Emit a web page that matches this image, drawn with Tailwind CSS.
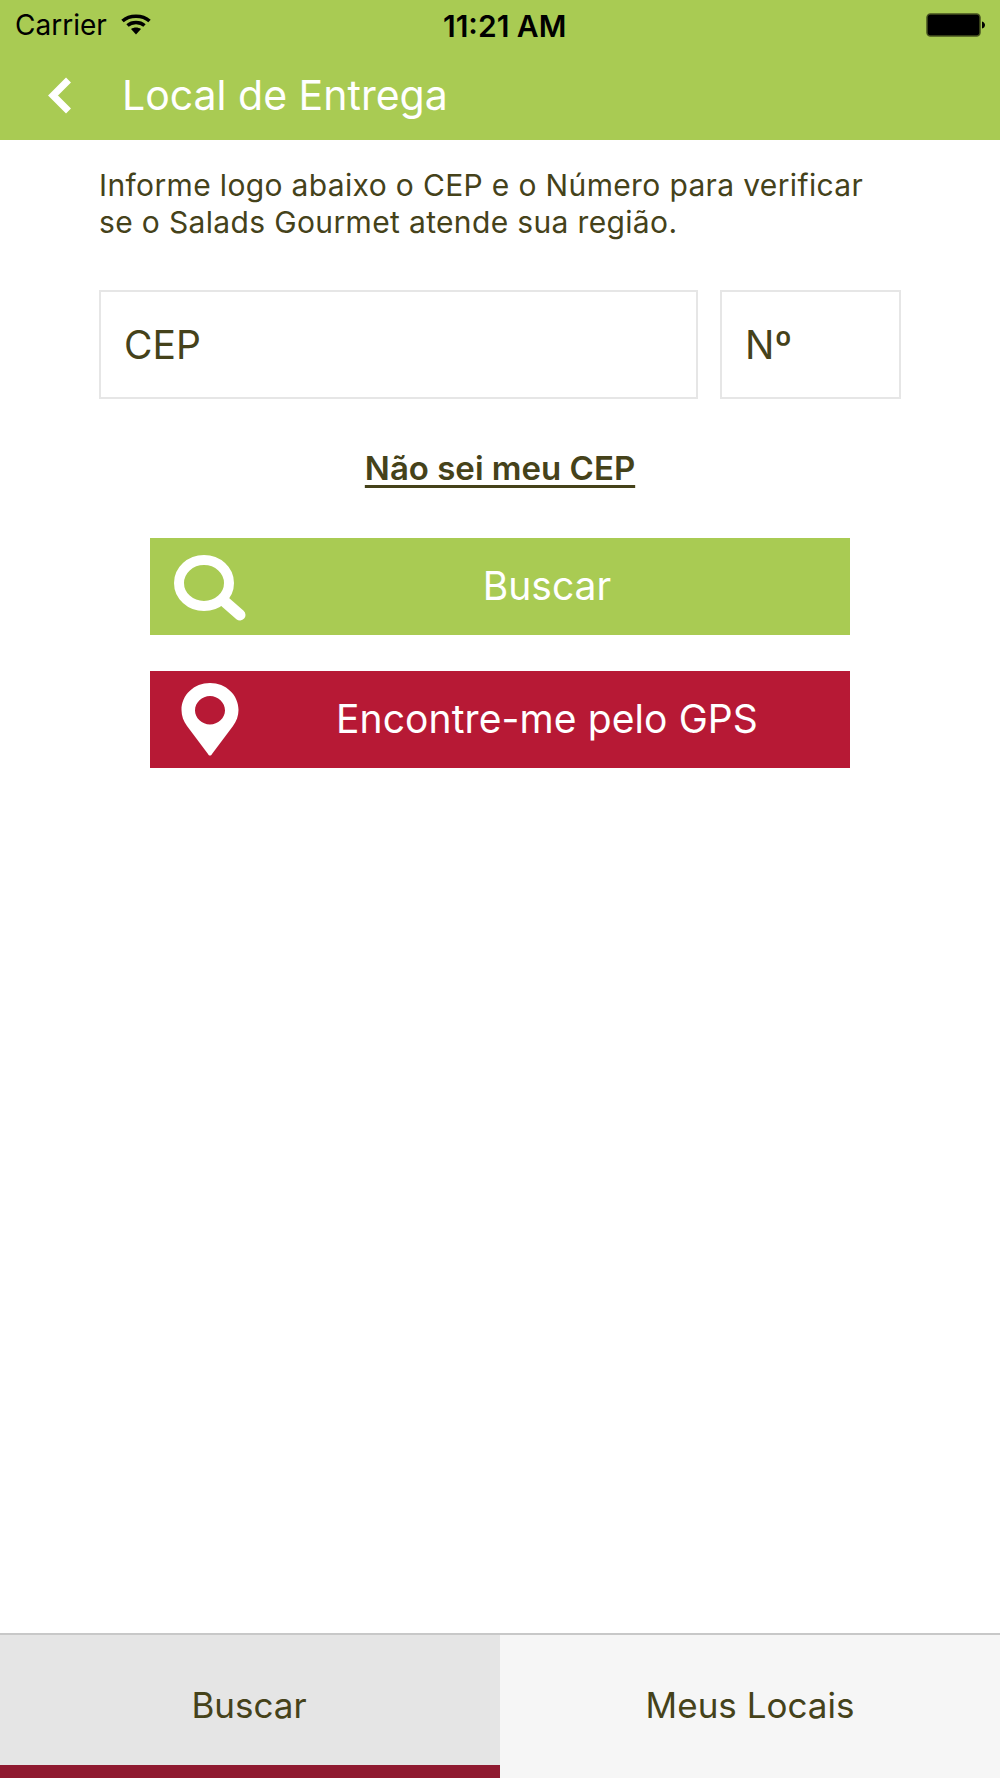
<!DOCTYPE html>
<html lang="pt">
<head>
<meta charset="utf-8">
<title>Local de Entrega</title>
<script src="https://cdn.jsdelivr.net/npm/@tailwindcss/browser@4"></script>
</head>
<body class="bg-white font-['Inter',sans-serif] text-[#45421a]">
<div class="flex h-[1778px] w-[1000px] flex-col overflow-hidden">
  <header class="flex h-[140px] shrink-0 flex-col bg-[#a9cb53]">
    <div class="relative flex h-[50px] shrink-0 items-center justify-between pl-[15px] pr-[14px] text-black">
      <div class="flex items-center gap-[14px]">
        <span class="text-[28px] leading-none">Carrier</span>
        <svg class="mb-[2px]" width="30" height="22" viewBox="0 0 30 22"><path d="M1.500 8 C8.500 1.500 21.500 1.500 28.500 8" fill="none" stroke="#000" stroke-width="3.500"/><path d="M6.500 12.500 C11 8.500 19 8.500 23.500 12.500" fill="none" stroke="#000" stroke-width="3.500"/><path d="M10 16 C13 14 17 14 20 16 L15 21.500 Z" fill="#000"/></svg>
      </div>
      <span class="absolute left-[443px] top-[11px] text-[30px] leading-none font-semibold whitespace-nowrap">11:21 AM</span>
      <svg class="mb-[1px]" width="60" height="24" viewBox="0 0 60 24"><rect x="1" y="1" width="53" height="22" rx="3.500" fill="#000" stroke="#45511f" stroke-width="1.500"/><path d="M56 8.500 C58 9 59 10.500 59 12 C59 13.500 58 15 56 15.500 Z" fill="#000"/></svg>
    </div>
    <div class="flex flex-1 items-center pl-[46px]">
      <svg width="27" height="39" viewBox="0 0 27 39"><path d="M22.500 4 L7 19.500 L22.500 35" fill="none" stroke="#fff" stroke-width="7"/></svg>
      <h1 class="ml-[49px] text-[41px] leading-none font-normal text-white">Local de Entrega</h1>
    </div>
  </header>

  <main class="flex flex-1 flex-col">
    <p class="ml-[99px] mt-[27px] text-[30px] leading-[37px] tracking-[0.35px]">Informe logo abaixo o CEP e o Número para verificar<br>se o Salads Gourmet atende sua região.</p>
    <div class="mt-[49px] ml-[99px] flex w-[802px] gap-[22px]">
      <div class="flex h-[109px] w-[599px] items-center border-2 border-[#e6e6e6] pl-[23px] text-[39px] leading-none">CEP</div>
      <div class="flex h-[109px] w-[181px] items-center border-2 border-[#e6e6e6] pl-[23px] text-[39px] leading-none">Nº</div>
    </div>
    <a class="mt-[49px] self-center text-[33px] leading-[40px] font-semibold underline underline-offset-[5px]" href="#">Não sei meu CEP</a>
    <button class="relative mx-[150px] mt-[50px] flex h-[97px] w-[700px] items-center justify-center bg-[#a9cb53] pl-[94px] text-[39px] text-white">
      <svg class="absolute left-[24px] top-[16px]" width="74" height="68" viewBox="0 0 74 68"><ellipse cx="30" cy="29" rx="25" ry="23" fill="none" stroke="#fff" stroke-width="10"/><path d="M50 47 L66 61" fill="none" stroke="#fff" stroke-width="11" stroke-linecap="round"/></svg>
      Buscar
    </button>
    <button class="relative mx-[150px] mt-[36px] flex h-[97px] w-[700px] items-center justify-center bg-[#b71935] pl-[94px] text-[39px] tracking-[0.1px] text-white">
      <svg class="absolute left-[31px] top-[12px]" width="58" height="73" viewBox="0 0 58 73"><path fill-rule="evenodd" d="M29 0 C45 0 57.500 12 57.500 27 C57.500 33 55.500 38 52 43 L31 71 C30 73 28 73 27 71 L6 43 C2.500 38 0.500 33 0.500 27 C0.500 12 13 0 29 0 Z M29 13 C21 13 14 19.500 14 27.500 C14 35 21 41.500 29 41.500 C37 41.500 44 35 44 27.500 C44 19.500 37 13 29 13 Z" fill="#fff"/></svg>
      Encontre-me pelo GPS
    </button>
  </main>

  <nav class="flex h-[145px] shrink-0 border-t-2 border-[#c8c8c8] text-[35px] leading-none">
    <div class="relative flex w-[500px] items-center justify-center bg-[#e5e5e5] pb-[3px] pr-[2px]">Buscar<span class="absolute inset-x-0 bottom-0 h-[13px] bg-[#8f1a30]"></span></div>
    <div class="flex w-[500px] items-center justify-center bg-[#f6f6f6] pb-[3px]">Meus Locais</div>
  </nav>
</div>
</body>
</html>
